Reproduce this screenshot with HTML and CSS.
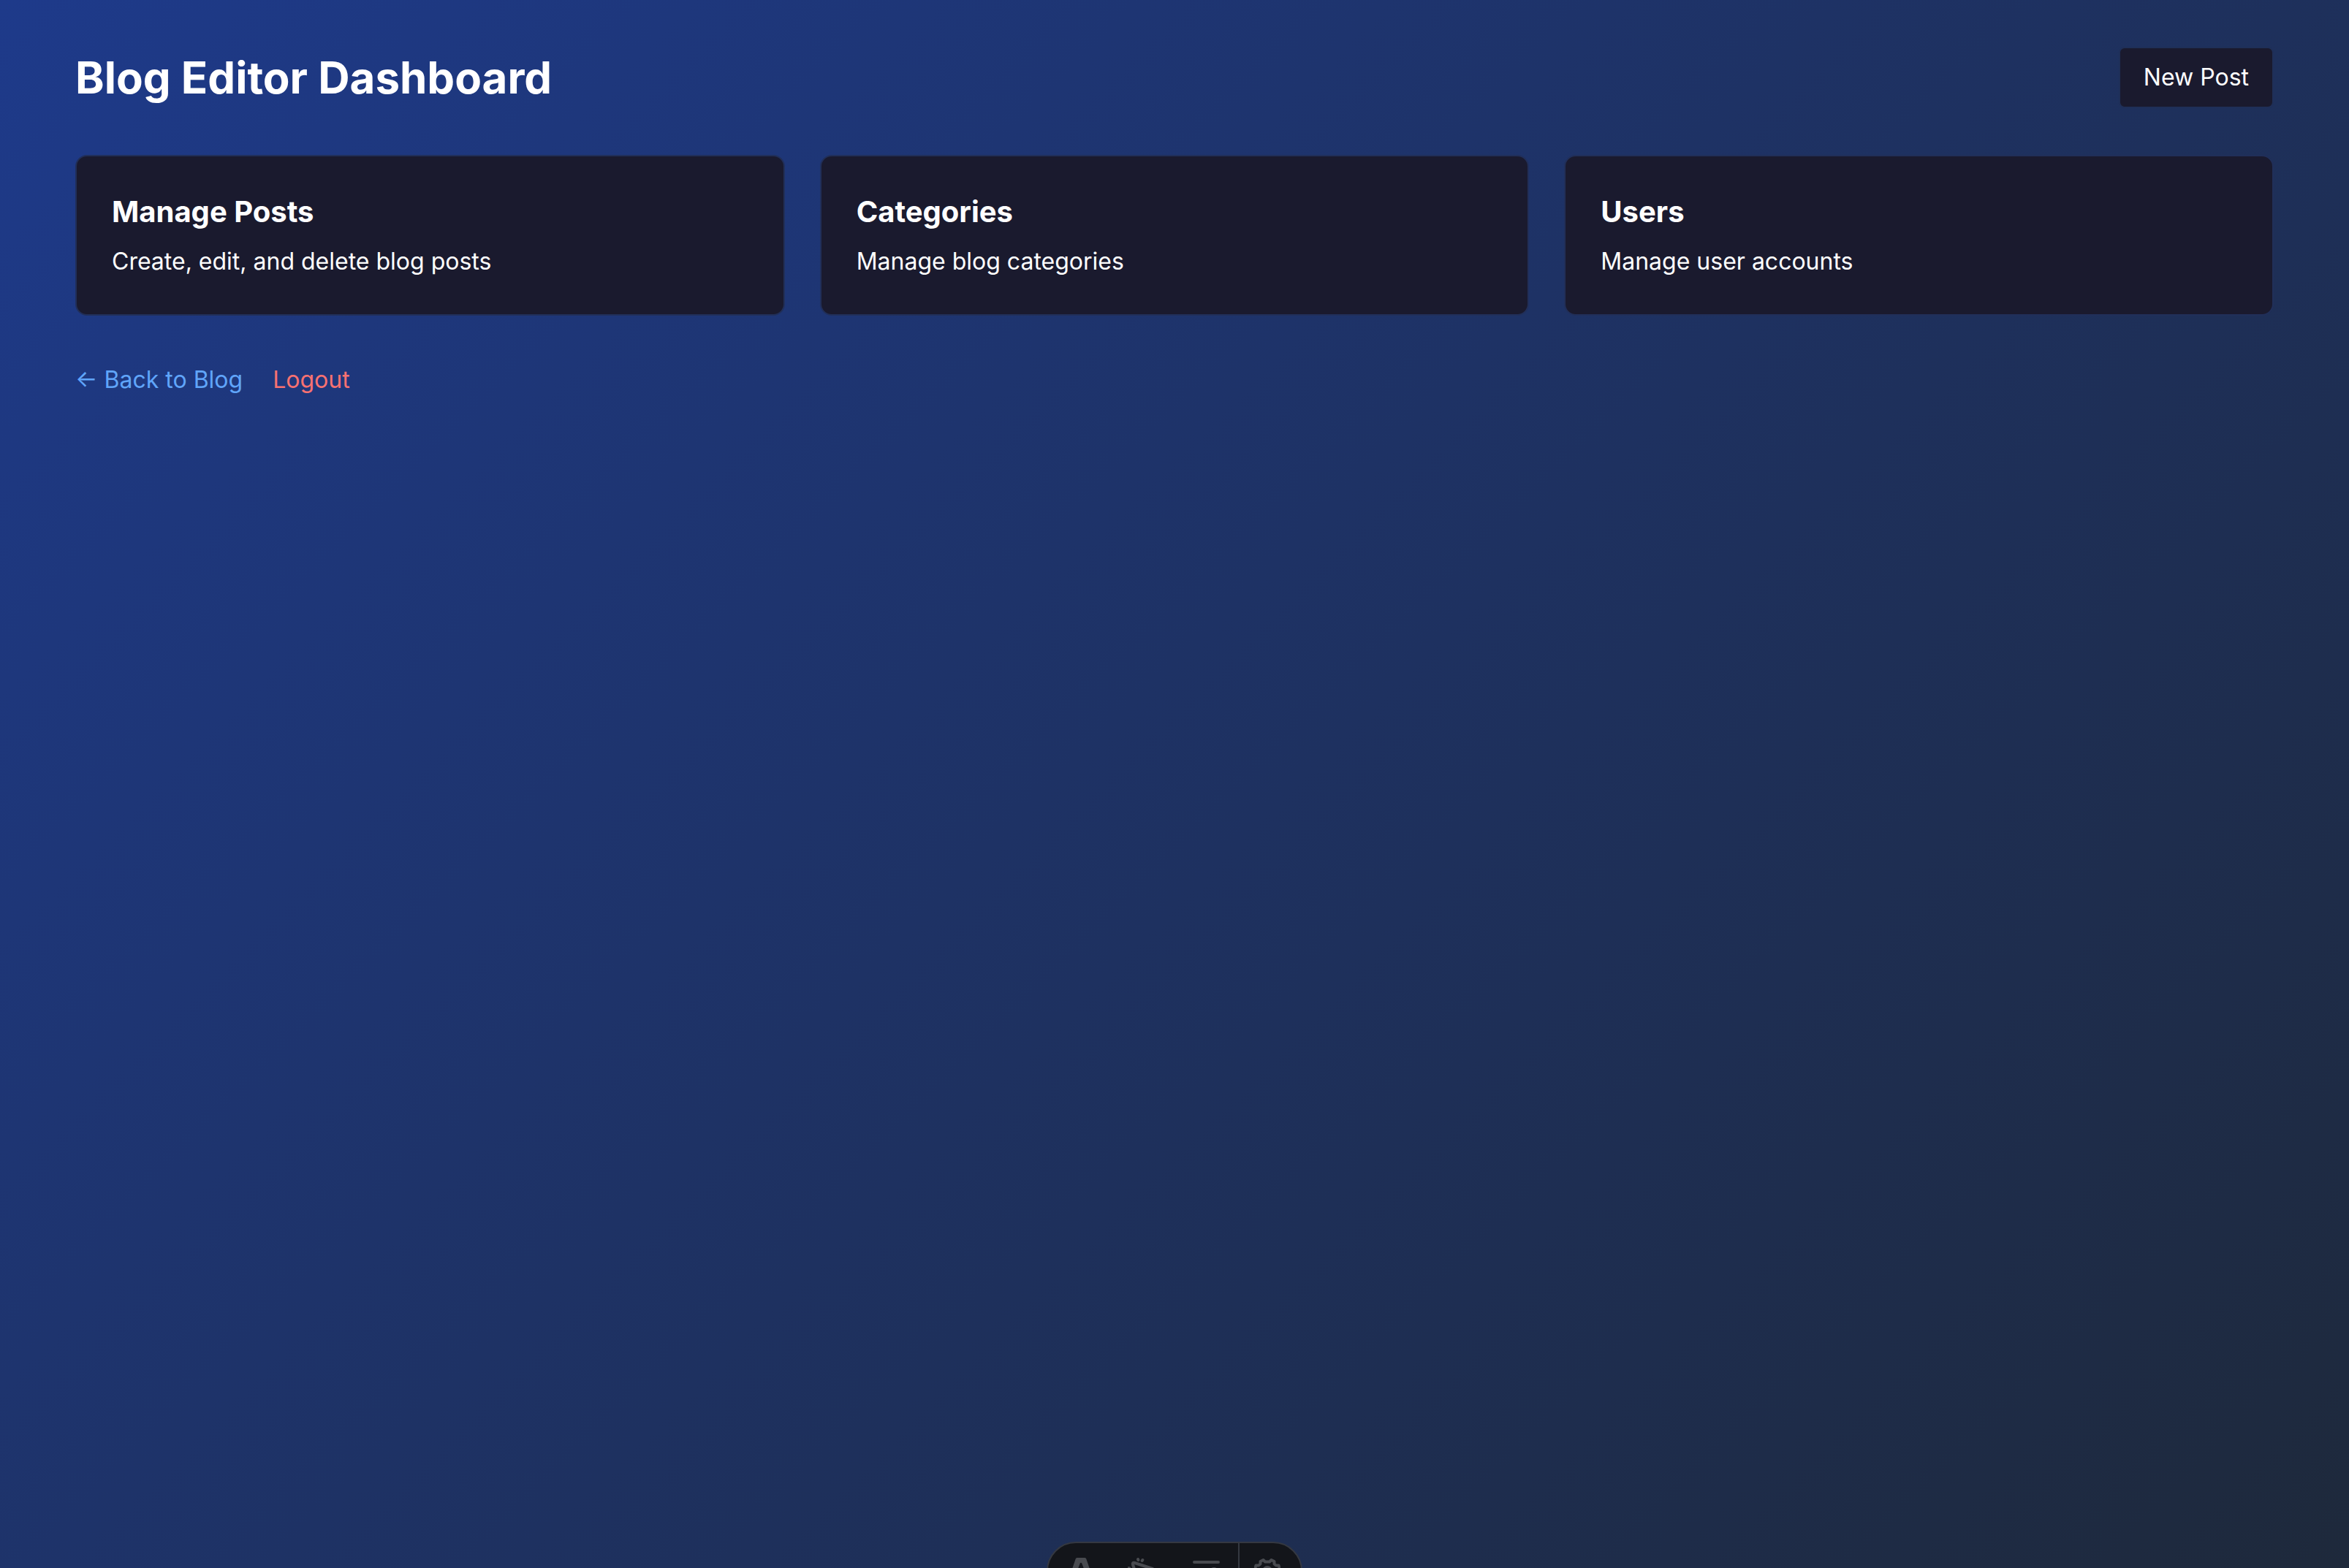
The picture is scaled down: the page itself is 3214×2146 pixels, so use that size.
FILE: index.html
```html
<!DOCTYPE html>
<html lang="en">
<head>
<meta charset="utf-8">
<meta name="viewport" content="width=device-width, initial-scale=1">
<title>Blog Editor Dashboard</title>
<link rel="stylesheet" href="styles.css">
</head>
<body>
<main class="container">
  <header class="header">
    <h1 class="title">Blog Editor Dashboard</h1>
    <button class="new-post" type="button">New Post</button>
  </header>
  <section class="cards">
    <a class="card" href="#posts">
      <h2 class="card-title">Manage Posts</h2>
      <p class="card-text">Create, edit, and delete blog posts</p>
    </a>
    <a class="card" href="#categories">
      <h2 class="card-title">Categories</h2>
      <p class="card-text">Manage blog categories</p>
    </a>
    <a class="card" href="#users">
      <h2 class="card-title">Users</h2>
      <p class="card-text">Manage user accounts</p>
    </a>
  </section>
  <nav class="links">
    <a class="link-back" href="#blog">← Back to Blog</a>
    <a class="link-logout" href="#logout">Logout</a>
  </nav>
</main>
<div class="toolbar">
  <button class="tool" type="button" aria-label="Menu">
    <svg width="32" height="36" viewBox="0 0 32 36"><path fill="currentColor" fill-rule="evenodd" d="M10.500 0H21.500Q22.800 0 23.300 1.500L32 27H24.500L17.200 7.500Q16 6 14.800 7.500L7.500 27H0L8.700 1.500Q9.200 0 10.500 0Z"/></svg>
  </button>
  <button class="tool" type="button" aria-label="Inspect">
    <svg width="44" height="36" viewBox="0 0 44 36" fill="none" stroke="currentColor" stroke-width="4" stroke-linejoin="round" stroke-linecap="round"><path d="M9.500 7Q6 6 7 9.500L15 33L21 22L34 15Z"/><path d="M14 2L14.400 3M20.300 3L19.700 4M1.500 14L2.500 14.500"/></svg>
  </button>
  <button class="tool" type="button" aria-label="Audit">
    <svg width="38" height="36" viewBox="0 0 38 36" fill="none" stroke="currentColor" stroke-width="4" stroke-linecap="round"><path d="M2 6H35M2 18H16"/><circle cx="29" cy="20" r="5"/></svg>
  </button>
  <button class="tool tool-settings" type="button" aria-label="Settings">
    <svg width="36" height="36" viewBox="0 0 36 36" fill="none" stroke="currentColor" stroke-width="4" stroke-linejoin="round"><path d="M12.500 3L15 5.500H21L23.500 3L27.500 5V8.500L30 10.500L33.500 10.500L35 15L32.500 18L35 21L33.500 25.500H30L27.500 28V31L23.500 33L21 30.500H15L12.500 33L8.500 31V28L6 25.500H2.500L1 21L3.500 18L1 15L2.500 10.500L6 10.500L8.500 8.500V5Z"/><circle cx="18" cy="18" r="5"/></svg>
  </button>
</div>
</body>
</html>
```
FILE: styles.css
```css
* {
  box-sizing: border-box;
  margin: 0;
}

body {
  min-height: 100vh;
  overflow: hidden;
  background: linear-gradient(135deg, #1e3a8a, #1e293b);
  color: #fff;
  font-family: Inter, sans-serif;
  font-size: 32px;
  line-height: 48px;
}

.container {
  max-width: 3072px;
  margin: 0 auto;
  padding: 64px 32px;
}

.header {
  display: flex;
  justify-content: space-between;
  align-items: center;
  margin-bottom: 64px;
}

.title {
  font-size: 60px;
  line-height: 72px;
  font-weight: 700;
}

.new-post {
  padding: 16px 32px;
  border: 2px solid #1f2f58;
  border-radius: 8px;
  background: #1a1a2e;
  color: inherit;
  font: inherit;
}

.cards {
  display: grid;
  grid-template-columns: repeat(3, 1fr);
  gap: 48px;
}

.card {
  padding: 48px;
  border: 2px solid #212f59;
  border-radius: 16px;
  background: #1a1a2e;
  color: inherit;
  text-decoration: none;
}

.card-title {
  margin-bottom: 16px;
  font-size: 40px;
  line-height: 56px;
  font-weight: 700;
}

.links {
  margin-top: 64px;
}

.links a {
  text-decoration: none;
}

.link-back {
  margin-right: 32px;
  color: #60a5fa;
}

.link-logout {
  color: #f87171;
}

/* Floating toolbar, tucked mostly below the window's lower edge */
.toolbar {
  position: fixed;
  left: 50%;
  bottom: -44px;
  display: flex;
  height: 80px;
  padding: 0 8px 0 2px;
  overflow: hidden;
  border: 2px solid #343841;
  border-radius: 40px;
  background: #13151a;
  transform: translateX(-50%);
}

.tool {
  display: flex;
  justify-content: center;
  align-items: center;
  width: 86px;
  padding: 0;
  border: 0;
  background: none;
  color: #494b50;
}

.tool-settings {
  width: 78px;
  border-left: 2px solid #343841;
}
```
